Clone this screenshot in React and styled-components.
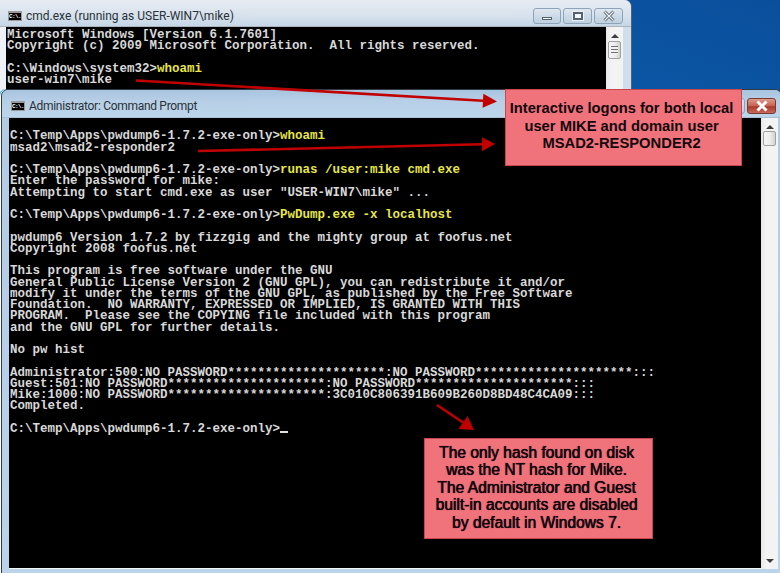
import React from 'react';
import styled, { createGlobalStyle } from 'styled-components';

const GlobalStyle = createGlobalStyle`
  html, body {
    margin: 0;
    padding: 0;
    background: #0a5bab;
  }
`;

const prompt = 'C:\\Temp\\Apps\\pwdump6-1.7.2-exe-only>';
const stars = '*'.repeat(21);

function BackLines() {
  return (
    <>
      {'Microsoft Windows [Version 6.1.7601]\n'}
      {'Copyright (c) 2009 Microsoft Corporation.  All rights reserved.\n'}
      {'\n'}
      {'C:\\Windows\\system32>'}<Typed>whoami</Typed>{'\n'}
      {'user-win7\\mike\n'}
    </>
  );
}

function FrontLines() {
  return (
    <>
      {'\n'}
      {prompt}<Typed>whoami</Typed>{'\n'}
      {'msad2\\msad2-responder2\n'}
      {'\n'}
      {prompt}<Typed>runas /user:mike cmd.exe</Typed>{'\n'}
      {'Enter the password for mike:\n'}
      {'Attempting to start cmd.exe as user "USER-WIN7\\mike" ...\n'}
      {'\n'}
      {prompt}<Typed>PwDump.exe -x localhost</Typed>{'\n'}
      {'\n'}
      {'pwdump6 Version 1.7.2 by fizzgig and the mighty group at foofus.net\n'}
      {'Copyright 2008 foofus.net\n'}
      {'\n'}
      {'This program is free software under the GNU\n'}
      {'General Public License Version 2 (GNU GPL), you can redistribute it and/or\n'}
      {'modify it under the terms of the GNU GPL, as published by the Free Software\n'}
      {'Foundation.  NO WARRANTY, EXPRESSED OR IMPLIED, IS GRANTED WITH THIS\n'}
      {'PROGRAM.  Please see the COPYING file included with this program\n'}
      {'and the GNU GPL for further details.\n'}
      {'\n'}
      {'No pw hist\n'}
      {'\n'}
      {`Administrator:500:NO PASSWORD${stars}:NO PASSWORD${stars}:::\n`}
      {`Guest:501:NO PASSWORD${stars}:NO PASSWORD${stars}:::\n`}
      {`Mike:1000:NO PASSWORD${stars}:3C010C806391B609B260D8BD48C4CA09:::\n`}
      {'Completed.\n'}
      {'\n'}
      {prompt}<Cursor />
    </>
  );
}

function ConsoleIcon() {
  return (
    <IconBox>
      <IconText>C:\.</IconText>
    </IconBox>
  );
}

function Scrollbar({ thumbHeight, grip, thumbTop }) {
  return (
    <ScrollTrack>
      <ArrowUp />
      <Thumb $height={thumbHeight} $top={thumbTop}>
        {grip && <Grip />}
      </Thumb>
      <ArrowDown />
    </ScrollTrack>
  );
}

function WindowButtons({ active }) {
  return (
    <Buttons>
      <CtrlButton $w={28}><MinGlyph /></CtrlButton>
      <CtrlButton $w={29}><MaxGlyph /></CtrlButton>
      <CtrlButton $w={29} $close={active}>
        <svg width="14" height="12" viewBox="0 0 14 12">
          <path d="M2.5 1.5 L11.5 10.5 M11.5 1.5 L2.5 10.5" stroke={active ? '#fff' : '#4d5b68'} strokeWidth="3" />
          {!active && <path d="M2.5 1.5 L11.5 10.5 M11.5 1.5 L2.5 10.5" stroke="#f2f5f8" strokeWidth="1.2" />}
        </svg>
      </CtrlButton>
    </Buttons>
  );
}

function Arrow({ x1, y1, x2, y2, bx, by, px, py }) {
  return (
    <>
      <line x1={x1} y1={y1} x2={bx} y2={by} stroke="#c00000" strokeWidth="2.6" />
      <polygon points={`${x2},${y2} ${bx + px},${by + py} ${bx - px},${by - py}`} fill="#c00000" />
    </>
  );
}

export default function App() {
  return (
    <>
      <GlobalStyle />
      <Desktop>
        <BackWindow>
          <TitleBar $height={26}>
            <ConsoleIcon />
            <TitleText>cmd.exe (running as USER-WIN7\mike)</TitleText>
            <WindowButtons />
          </TitleBar>
          <Body>
            <Terminal $pad="3px 0 0 1px"><BackLines /></Terminal>
            <Scrollbar thumbHeight={18} thumbTop={3} grip />
          </Body>
        </BackWindow>

        <FrontWindow>
          <TitleBar $height={27} $active>
            <ConsoleIcon />
            <TitleText $tight>Administrator: Command Prompt</TitleText>
            <WindowButtons active />
          </TitleBar>
          <Body $active>
            <Terminal $pad="2px 0 0 1px"><FrontLines /></Terminal>
            <Scrollbar thumbHeight={15} thumbTop={2} />
          </Body>
        </FrontWindow>

        <ArrowLayer width="780" height="573" viewBox="0 0 780 573">
          <Arrow x1={136} y1={80.5} x2={497} y2={101.5} bx={483} by={100.7} px={0.4} py={-7} />
          <Arrow x1={198} y1={151} x2={495} y2={144} bx={482} by={144.3} px={0.2} py={-7} />
          <Arrow x1={437} y1={405} x2={474} y2={430} bx={463} by={422.5} px={4.5} py={-6.5} />
        </ArrowLayer>

        <Callout $left={505} $top={89} $width={237} $height={77}>
          <div>
            Interactive logons for both local<br />
            user MIKE and domain user<br />
            MSAD2-RESPONDER2
          </div>
        </Callout>
        <Callout $left={424} $top={438} $width={229} $height={101} $soft>
          <div>
            The only hash found on disk<br />
            was the NT hash for Mike.<br />
            The Administrator and Guest<br />
            built-in accounts are disabled<br />
            by default in Windows 7.
          </div>
        </Callout>
      </Desktop>
    </>
  );
}

const Desktop = styled.div`
  position: relative;
  width: 780px;
  height: 573px;
  overflow: hidden;
  background: linear-gradient(200deg, #0a4f9c 0%, #0d62b4 45%, #0a5bab 100%);
`;

const BackWindow = styled.div`
  position: absolute;
  left: -1px;
  top: 0;
  width: 633px;
  height: 110px;
  display: flex;
  flex-direction: column;
  box-sizing: border-box;
  border: 1px solid #55626e;
  border-top: none;
  border-radius: 0 7px 0 0;
  background: linear-gradient(90deg, #eef1f5 0%, #e6ecf2 60%, #cfdeec 100%);
`;

const FrontWindow = styled.div`
  position: absolute;
  left: 1px;
  top: 89px;
  width: 781px;
  height: 486px;
  display: flex;
  flex-direction: column;
  box-sizing: border-box;
  border: 1px solid #2f3a44;
  border-radius: 7px 7px 0 0;
  background: linear-gradient(180deg, #b2cbe3 0%, #bcd4ea 100%);
  box-shadow: -1px 0 0 #ffffff, -2px 0 0 #12a4f5;
`;

const TitleBar = styled.div`
  height: ${props => props.$height}px;
  flex: none;
  box-sizing: border-box;
  display: flex;
  align-items: center;
  padding: 5px ${props => (props.$active ? '5px' : '8px')} 0 ${props => (props.$active ? '9px' : '8px')};
  background: ${props => (props.$active
    ? 'linear-gradient(180deg, #a8c4df 0%, #b8d0e7 45%, #bdd5ea 100%)'
    : 'linear-gradient(180deg, #e7ecf2 0%, #d7e2ed 60%, #c6d6e6 100%)')};
  border-radius: inherit;
`;

const IconBox = styled.div`
  width: 14px;
  height: 10px;
  flex: none;
  box-sizing: border-box;
  background: #000;
  border: 1px solid #9a9a9a;
  border-top-width: 2px;
  overflow: hidden;
  display: flex;
  align-items: center;
`;

const IconText = styled.span`
  font: bold 6px/7px "Liberation Mono", monospace;
  color: #fff;
  letter-spacing: -0.6px;
`;

const TitleText = styled.div`
  margin-left: 4px;
  flex: 1;
  font: 12px/16px Roboto, sans-serif;
  letter-spacing: ${props => (props.$tight ? '-0.3px' : '0')};
  color: #2a3138;
  white-space: nowrap;
`;

const Buttons = styled.div`
  display: flex;
  gap: 2px;
  flex: none;
`;

const CtrlButton = styled.div`
  width: ${props => props.$w}px;
  height: 16px;
  box-sizing: border-box;
  display: flex;
  align-items: center;
  justify-content: center;
  border: 1px solid ${props => (props.$close ? '#7a3a34' : '#8fa3b8')};
  border-radius: 3px;
  background: ${props => (props.$close
    ? 'linear-gradient(180deg, #dd9a8c 0%, #c8614f 50%, #a83a2a 55%, #c86a5c 100%)'
    : 'linear-gradient(180deg, #dfe7ef 0%, #cddae7 50%, #bfd0e0 100%)')};
`;

const MinGlyph = styled.div`
  width: 10px;
  height: 3px;
  margin-top: 5px;
  box-sizing: border-box;
  background: #f4f6f8;
  border: 1px solid #55626f;
`;

const MaxGlyph = styled.div`
  width: 10px;
  height: 8px;
  box-sizing: border-box;
  border: 2px solid #55626f;
  background: #f4f6f8;
  outline: 1px solid #eef2f6;
`;

const Body = styled.div`
  flex: 1;
  min-height: 0;
  display: flex;
  padding: 0 ${props => (props.$active ? '3px' : '8px')} 0 ${props => (props.$active ? '7px' : '6px')};
  border-top: 1px solid ${props => (props.$active ? '#a8bed3' : '#a9b4bf')};
  margin-bottom: ${props => (props.$active ? '5px' : '0')};
`;

const Terminal = styled.pre`
  flex: 1;
  min-width: 0;
  margin: 0;
  padding: ${props => props.$pad};
  background: #000;
  color: #d8d8d8;
  font: 700 12.5px/11.25px "Liberation Mono", monospace;
  overflow: hidden;
  border-bottom: 1px solid #f4f6f8;
`;

const Typed = styled.span`
  color: #e6e64a;
`;

const Cursor = styled.span`
  display: inline-block;
  width: 8px;
  height: 2px;
  vertical-align: -1px;
  background: #e0e0e0;
`;

const ScrollTrack = styled.div`
  width: 17px;
  flex: none;
  display: flex;
  flex-direction: column;
  align-items: center;
  background: linear-gradient(90deg, #e8e8e8 0%, #f3f3f3 30%, #f3f3f3 100%);
  padding-top: 7px;
  box-sizing: border-box;
`;

const ArrowUp = styled.div`
  width: 0;
  height: 0;
  border-left: 4px solid transparent;
  border-right: 4px solid transparent;
  border-bottom: 4px solid #3d3d3d;
  flex: none;
`;

const ArrowDown = styled.div`
  width: 0;
  height: 0;
  margin-top: auto;
  margin-bottom: 6px;
  border-left: 4px solid transparent;
  border-right: 4px solid transparent;
  border-top: 4px solid #3d3d3d;
  flex: none;
`;

const Thumb = styled.div`
  width: 13px;
  height: ${props => props.$height}px;
  margin-top: ${props => props.$top}px;
  box-sizing: border-box;
  flex: none;
  display: flex;
  align-items: center;
  justify-content: center;
  border: 1px solid #a0a0a0;
  border-radius: 2px;
  background: linear-gradient(90deg, #f6f6f6 0%, #ececec 55%, #d2d2d2 100%);
`;

const Grip = styled.div`
  width: 7px;
  height: 8px;
  background: repeating-linear-gradient(180deg, #6f6f6f 0, #6f6f6f 1px, #f2f2f2 1px, #f2f2f2 3px);
`;

const ArrowLayer = styled.svg`
  position: absolute;
  left: 0;
  top: 0;
  pointer-events: none;
`;

const Callout = styled.div`
  position: absolute;
  left: ${props => props.$left}px;
  top: ${props => props.$top}px;
  width: ${props => props.$width}px;
  height: ${props => props.$height}px;
  box-sizing: border-box;
  padding: 0 4px 2px 0;
  display: flex;
  align-items: center;
  justify-content: center;
  text-align: center;
  background: #f0737c;
  border: 1px solid #c8474f;
  color: #14080c;
  font: ${props => (props.$soft ? '400 15.6px' : '700 14.75px')}/17.5px "Liberation Sans", Arial, sans-serif;
  text-shadow: ${props => (props.$soft ? '0.4px 0 0 #14080c, 0 0 1px #5a1c2a' : 'none')};
`;
